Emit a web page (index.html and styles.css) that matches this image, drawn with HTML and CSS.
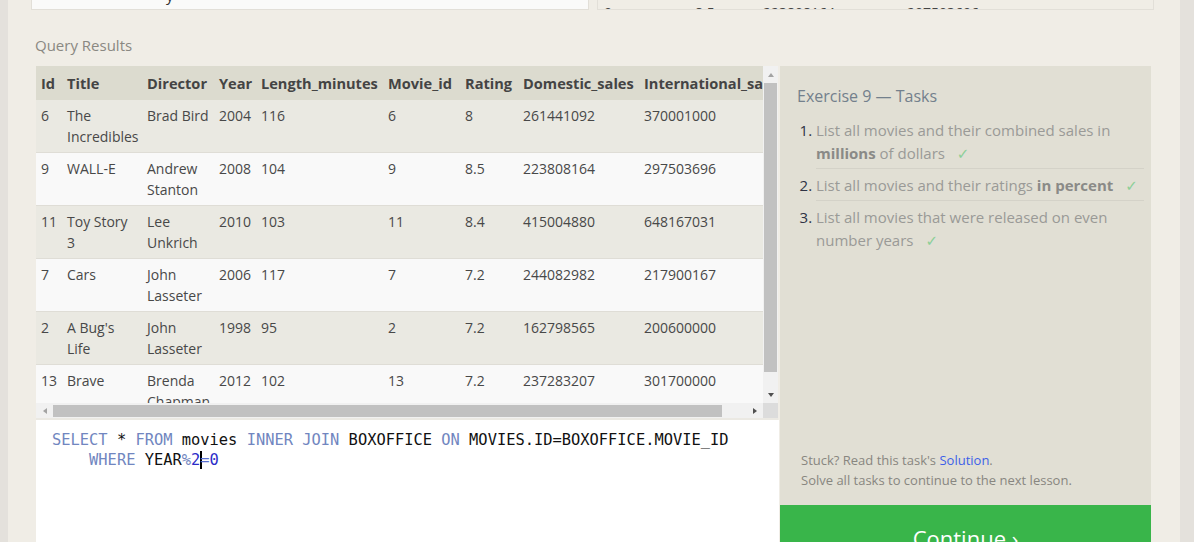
FILE: index.html
```html
<!DOCTYPE html>
<html>
<head>
<meta charset="utf-8">
<link rel="stylesheet" href="styles.css">
</head>
<body>
<div class="page">
  <div class="strip strip-left"></div>
  <div class="main">
    <div class="top-row">
      <div class="top-box top-left"><span class="desc">y</span></div>
      <div class="top-box top-right">
        <span class="t1">9</span><span class="t2">8.5</span><span class="t3">223808164</span><span class="t4">297503696</span>
      </div>
    </div>
    <div class="label">Query Results</div>
    <div class="workspace">
      <div class="left-col">
        <div class="results">
          <div class="viewport">
            <table class="grid">
              <colgroup>
                <col class="c-id"><col class="c-title"><col class="c-dir"><col class="c-year"><col class="c-len"><col class="c-mid"><col class="c-rat"><col class="c-dom"><col class="c-int">
              </colgroup>
              <thead>
                <tr><th>Id</th><th>Title</th><th>Director</th><th>Year</th><th>Length_minutes</th><th>Movie_id</th><th>Rating</th><th>Domestic_sales</th><th>International_sales</th></tr>
              </thead>
              <tbody>
                <tr><td>6</td><td>The Incredibles</td><td>Brad Bird</td><td>2004</td><td>116</td><td>6</td><td>8</td><td>261441092</td><td>370001000</td></tr>
                <tr><td>9</td><td>WALL-E</td><td>Andrew Stanton</td><td>2008</td><td>104</td><td>9</td><td>8.5</td><td>223808164</td><td>297503696</td></tr>
                <tr><td>11</td><td>Toy Story 3</td><td>Lee Unkrich</td><td>2010</td><td>103</td><td>11</td><td>8.4</td><td>415004880</td><td>648167031</td></tr>
                <tr><td>7</td><td>Cars</td><td>John Lasseter</td><td>2006</td><td>117</td><td>7</td><td>7.2</td><td>244082982</td><td>217900167</td></tr>
                <tr><td>2</td><td>A Bug's Life</td><td>John Lasseter</td><td>1998</td><td>95</td><td>2</td><td>7.2</td><td>162798565</td><td>200600000</td></tr>
                <tr><td>13</td><td>Brave</td><td>Brenda Chapman</td><td>2012</td><td>102</td><td>13</td><td>7.2</td><td>237283207</td><td>301700000</td></tr>
              </tbody>
            </table>
          </div>
          <div class="vbar">
            <div class="sb-btn"><span class="arrow up"></span></div>
            <div class="vtrack"><div class="vthumb"></div></div>
            <div class="sb-btn"><span class="arrow down"></span></div>
          </div>
          <div class="hbar">
            <div class="sb-btn-h"><span class="arrow left"></span></div>
            <div class="htrack"><div class="hthumb"></div></div>
            <div class="sb-btn-h"><span class="arrow right"></span></div>
          </div>
          <div class="corner"></div>
        </div>
        <div class="editor">
          <div class="code-line"><span class="kw">SELECT</span> * <span class="kw">FROM</span> movies <span class="kw">INNER</span> <span class="kw">JOIN</span> BOXOFFICE <span class="kw">ON</span> MOVIES.ID=BOXOFFICE.MOVIE_ID</div>
          <div class="code-line">    <span class="kw">WHERE</span> YEAR<span class="kw">%</span><span class="num">2</span><span class="cursor"></span><span class="op">=</span><span class="num">0</span></div>
        </div>
      </div>
      <div class="side">
        <div class="panel">
          <div class="panel-title">Exercise 9 — Tasks</div>
          <ol class="tasks">
            <li>List all movies and their combined sales in <b>millions</b> of dollars <span class="check">✓</span></li>
            <li>List all movies and their ratings <b>in percent</b> <span class="check">✓</span></li>
            <li class="last">List all movies that were released on even number years <span class="check">✓</span></li>
          </ol>
          <div class="panel-foot">
            <div>Stuck? Read this task's <span class="link">Solution</span>.</div>
            <div>Solve all tasks to continue to the next lesson.</div>
          </div>
        </div>
        <div class="continue">Continue ›</div>
      </div>
    </div>
  </div>
  <div class="strip strip-right"></div>
</div>
</body>
</html>
```

FILE: styles.css
```css
html, body {
  margin: 0;
  padding: 0;
  height: 542px;
  overflow: hidden;
  background: #f0ede6;
  font-family: "Open Sans", "Liberation Sans", sans-serif;
}

.page {
  display: flex;
  height: 542px;
}

.strip {
  background: #e4e1dc;
  flex: none;
}
.strip-left { width: 8px; }
.strip-right { width: 14px; }

.main {
  flex: none;
  width: 1172px;
  display: flex;
  flex-direction: column;
}

.top-row {
  display: flex;
  height: 10px;
}

.top-box {
  height: 9px;
  border: 1px solid #e2dfd8;
  border-top: none;
  overflow: hidden;
  box-sizing: content-box;
}

.top-left {
  margin-left: 23px;
  width: 556px;
  background: #fafaf9;
}

.desc {
  display: block;
  margin-left: 134px;
  margin-top: -15px;
  font-size: 15px;
  line-height: 20px;
  color: #333;
}

.top-right {
  margin-left: 8px;
  width: 555px;
  display: flex;
  font-size: 14px;
  line-height: 21px;
  color: #444;
}
.top-right span { display: block; padding-top: 2px; }
.t1 { margin-left: 6px; width: 91px; }
.t2 { width: 68px; }
.t3 { width: 144px; }

.label {
  margin: 25px 0 0 27px;
  font-size: 15px;
  line-height: 20px;
  color: #8a8882;
}

.workspace {
  margin: 11px 0 0 28px;
  display: flex;
  align-items: flex-start;
}

.left-col {
  width: 743px;
  flex: none;
}

.results {
  display: grid;
  grid-template-columns: 727px 15px;
  grid-template-rows: 337px 15px;
  width: 742px;
  border-bottom: 2px solid #ebe9e3;
  background: #f9f9f9;
}

.viewport {
  overflow: hidden;
}

/* fake scrollbars */
.vbar {
  display: flex;
  flex-direction: column;
  background: #f1f1f1;
}

.sb-btn {
  height: 17px;
  display: flex;
  align-items: center;
  justify-content: center;
  flex: none;
}

.vtrack {
  flex: 1;
  padding: 0 1px 14px 1px;
  display: flex;
}

.vthumb {
  flex: 1;
  background: #c1c1c1;
}

.hbar {
  display: flex;
  background: #f1f1f1;
}

.sb-btn-h {
  width: 17px;
  display: flex;
  align-items: center;
  justify-content: center;
  flex: none;
}

.htrack {
  flex: 1;
  padding: 2px 24px 1px 0;
  display: flex;
}

.hthumb {
  flex: 1;
  background: #c1c1c1;
}

.corner {
  background: #dcdcdc;
}

.arrow {
  width: 0;
  height: 0;
  border-style: solid;
  display: block;
}

.arrow.up {
  border-width: 0 3.5px 4px 3.5px;
  border-color: transparent transparent #a3a3a3 transparent;
}

.arrow.down {
  border-width: 4px 3.5px 0 3.5px;
  border-color: #505050 transparent transparent transparent;
}

.arrow.left {
  border-width: 3.5px 4px 3.5px 0;
  border-color: transparent #a3a3a3 transparent transparent;
}

.arrow.right {
  border-width: 3.5px 0 3.5px 4px;
  border-color: transparent transparent transparent #505050;
}

.grid {
  table-layout: fixed;
  width: 759px;
  border-collapse: collapse;
  font-size: 14px;
  color: #484848;
}

.c-id { width: 26px; }
.c-title { width: 80px; }
.c-dir { width: 72px; }
.c-year { width: 42px; }
.c-len { width: 127px; }
.c-mid { width: 77px; }
.c-rat { width: 58px; }
.c-dom { width: 121px; }
.c-int { width: 156px; }

.grid th {
  background: #dcdbcf;
  text-align: left;
  font-weight: 700;
  font-size: 14.6px;
  color: #444;
  padding: 7px 5px 6px;
  line-height: 21px;
  white-space: nowrap;
  overflow: hidden;
}

.grid td {
  padding: 5px 5px 5px;
  line-height: 21px;
  vertical-align: top;
  border-bottom: 1px solid #dfddd6;
  overflow: hidden;
}

.grid tbody tr:nth-child(odd) td { background: #eae9e2; }
.grid tbody tr:nth-child(even) td { background: #f9f9f9; }

.editor {
  background: #fff;
  height: 140px;
  padding: 10px 0 0 16px;
  font-family: "DejaVu Sans Mono", "Liberation Mono", monospace;
  font-size: 15.4px;
  line-height: 20px;
  color: #111;
}

.code-line {
  white-space: pre;
  height: 20px;
}

.kw { color: #7186c0; }
.num { color: #2c2cc8; }
.op { color: #5a6fd0; }

.cursor {
  display: inline-block;
  width: 2px;
  height: 18px;
  background: #000;
  vertical-align: -4px;
  margin-right: -2px;
}

.side {
  width: 371px;
  margin-left: 1px;
  flex: none;
  display: flex;
  flex-direction: column;
}

.panel {
  background: #e1dfd4;
  height: 439px;
  box-sizing: border-box;
  padding: 19px 7px 15px 17px;
  display: flex;
  flex-direction: column;
}

.panel-title {
  font-size: 16px;
  line-height: 22px;
  color: #73808c;
}

.tasks {
  margin: 7px 0 0 0;
  padding-left: 19px;
  font-size: 15px;
  line-height: 23px;
  color: #9a9a97;
}

.tasks li {
  padding: 5px 0 2px 0;
  border-bottom: 1px solid #d4d2c8;
}

.tasks li::marker {
  color: #2e3344;
}

.tasks li.last { border-bottom: none; }

.tasks b {
  color: #8a8a87;
  font-weight: 700;
}

.check {
  color: #8ccf98;
  margin-left: 8px;
  font-family: "DejaVu Sans", sans-serif;
  font-size: 15px;
}

.panel-foot {
  margin-top: auto;
  padding-left: 4px;
  font-size: 13px;
  line-height: 20px;
  color: #888680;
}

.link { color: #3d5fe8; }

.continue {
  background: #39b54a;
  height: 80px;
  color: #fff;
  font-size: 22px;
  text-align: center;
  padding-top: 18px;
  box-sizing: border-box;
  line-height: 30px;
}
```
